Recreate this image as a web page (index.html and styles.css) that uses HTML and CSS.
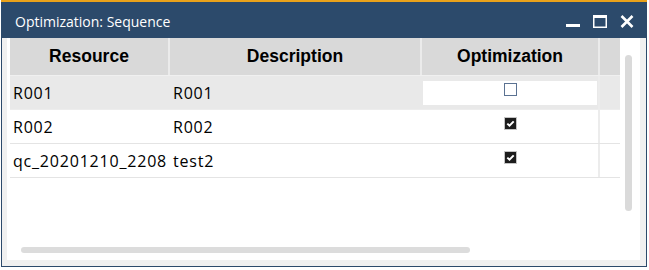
FILE: index.html
```html
<!DOCTYPE html>
<html>
<head>
<meta charset="utf-8">
<link rel="stylesheet" href="styles.css">
</head>
<body>
<div class="window">
  <div class="titlebar">
    <span class="title">Optimization: Sequence</span>
    <div class="controls">
      <svg class="ctl" width="14" height="13" viewBox="0 0 14 13"><rect x="0" y="9" width="14" height="3" fill="#fff"/></svg>
      <svg class="ctl" width="14" height="13" viewBox="0 0 14 13"><rect x="0.75" y="1.5" width="12.5" height="10.75" fill="none" stroke="#fff" stroke-width="1.5"/><rect x="0" y="0" width="14" height="3" fill="#fff"/></svg>
      <svg class="ctl" width="14" height="13" viewBox="0 0 14 13"><path d="M1.5 1 L12.5 12 M12.5 1 L1.5 12" stroke="#fff" stroke-width="2.6" fill="none"/></svg>
    </div>
  </div>
  <div class="frame">
    <div class="pane">
      <div class="grid">
        <div class="row head">
          <div class="hcell">Resource</div>
          <div class="hcell">Description</div>
          <div class="hcell">Optimization</div>
          <div class="hcell last"></div>
        </div>
        <div class="row sel">
          <div class="cell">R001</div>
          <div class="cell">R001</div>
          <div class="cell chk"><div class="editbox"><span class="box off"></span></div></div>
          <div class="cell last"></div>
        </div>
        <div class="row">
          <div class="cell">R002</div>
          <div class="cell">R002</div>
          <div class="cell chk"><span class="box on"><svg width="11" height="11" viewBox="0 0 11 11"><path d="M2.3 5.6 L4.5 7.7 L8.7 3.4" stroke="#fff" stroke-width="2" fill="none"/></svg></span></div>
          <div class="cell last"></div>
        </div>
        <div class="row">
          <div class="cell">qc_20201210_2208</div>
          <div class="cell">test2</div>
          <div class="cell chk"><span class="box on"><svg width="11" height="11" viewBox="0 0 11 11"><path d="M2.3 5.6 L4.5 7.7 L8.7 3.4" stroke="#fff" stroke-width="2" fill="none"/></svg></span></div>
          <div class="cell last"></div>
        </div>
      </div>
      <div class="vscroll"></div>
      <div class="hscroll"></div>
    </div>
  </div>
</div>
</body>
</html>
```

FILE: styles.css
```css
html, body {
  margin: 0;
  padding: 0;
  background: #ffffff;
}
body {
  width: 649px;
  height: 270px;
  overflow: hidden;
}
.window {
  margin-left: 1px;
  width: 646px;
  height: 267px;
  box-sizing: border-box;
  border: 1px solid #2c4a6b;
  border-top: 0;
  display: flex;
  flex-direction: column;
  background: #f0f0f0;
}
.titlebar {
  height: 38px;
  box-sizing: border-box;
  border-top: 2px solid #eaa21a;
  background: #2c4a6b;
  display: flex;
  align-items: center;
  padding: 3px 13px 0 14px;
  margin: 0 -1px;
}
.title {
  font-family: "Open Sans", sans-serif;
  font-size: 14px;
  color: #ffffff;
  flex: 1;
}
.controls {
  display: flex;
  align-items: center;
  gap: 13px;
}
.ctl {
  display: block;
}
.frame {
  flex: 1;
  padding: 0 6px 6px 5px;
  display: flex;
}
.pane {
  flex: 1;
  background: #ffffff;
  position: relative;
  padding-left: 3px;
}
.grid {
  display: flex;
  flex-direction: column;
  width: 610px;
}
.row {
  display: grid;
  grid-template-columns: 160px 252px 178px 20px;
  height: 34px;
  box-sizing: border-box;
  border-bottom: 1px solid #e4e4e4;
  font-family: "Open Sans", sans-serif;
  font-size: 16px;
  letter-spacing: 0.8px;
  color: #000;
}
.row.head {
  height: 38px;
  border-bottom: 1px solid #f0f0f0;
  font-family: "Liberation Sans", Arial, sans-serif;
  font-weight: bold;
  font-size: 17.5px;
  letter-spacing: 0;
}
.hcell {
  background: #d9d9d9;
  border-right: 2px solid #ebebeb;
  display: flex;
  align-items: center;
  justify-content: center;
}
.hcell.last {
  border-right: 0;
}
.row.sel {
  background: #e9e9e9;
  border-bottom-color: #ededed;
}
.cell {
  display: flex;
  align-items: center;
  padding-left: 3px;
  white-space: nowrap;
  overflow: visible;
}
.cell.chk {
  justify-content: center;
  padding-left: 0;
  border-right: 2px solid #ececec;
}
.editbox {
  width: 174px;
  height: 24px;
  background: #ffffff;
  display: flex;
  align-items: center;
  justify-content: center;
}
.box {
  width: 13px;
  height: 13px;
  box-sizing: border-box;
  display: flex;
  align-items: center;
  justify-content: center;
}
.box.off {
  border: 1px solid #5b7292;
  background: #fff;
  margin-top: -6px;
}
.box.on {
  border: 1px solid #c4c4c4;
  background: #1c1c1c;
  margin-top: -7px;
}
.box svg {
  display: block;
}
.vscroll {
  position: absolute;
  left: 618px;
  top: 17px;
  width: 7px;
  height: 156px;
  border-radius: 4px;
  background: #dadada;
}
.hscroll {
  position: absolute;
  left: 14px;
  top: 209px;
  width: 449px;
  height: 6px;
  border-radius: 3px;
  background: #dcdcdc;
}
```
